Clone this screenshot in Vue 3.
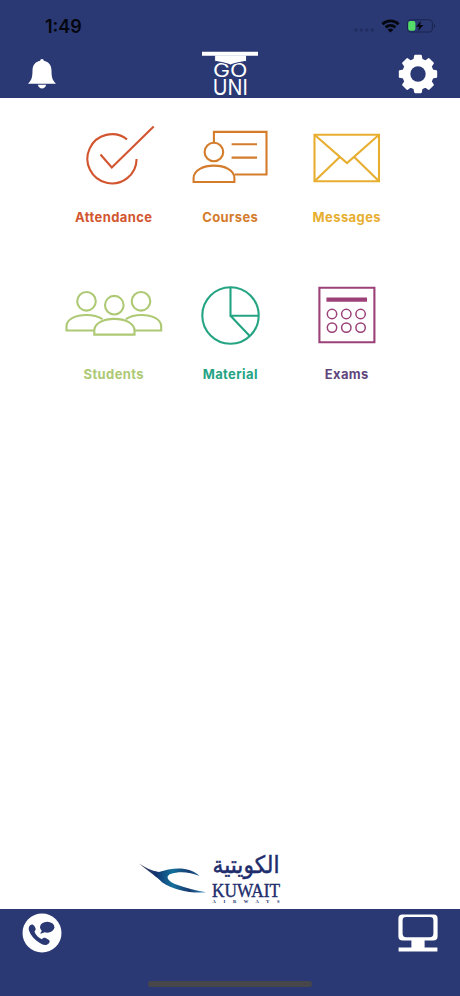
<template>
  <div class="screen">
    <header class="header">
      <div class="status-bar">
        <span class="time">1:49</span>
        <div class="status-icons">
          <svg class="signal" width="22" height="6" viewBox="0 0 22 6">
            <circle v-for="x in [3, 8.4, 13.8, 19.2]" :key="x" :cx="x" cy="3" r="1.8" />
          </svg>
          <svg width="19" height="14" viewBox="0 0 19 14">
            <g fill="none" stroke="#05070e" stroke-width="2.8">
              <path d="M1.4 5.2C6 .7 13 .7 17.6 5.2" />
              <path d="M4.6 8.4C7.4 5.8 11.6 5.8 14.4 8.4" />
            </g>
            <path d="M9.5 13.6 6.6 10.7Q9.5 8.3 12.4 10.7Z" fill="#05070e" />
          </svg>
          <svg class="battery" width="29" height="14" viewBox="0 0 29 14">
            <rect x=".6" y=".8" width="24.8" height="12.2" rx="3.6" fill="none" stroke="#1a2450" stroke-width="1.1" />
            <path d="M27 4.8Q29.2 6.9 27 9Z" fill="#1a2450" />
            <rect x="1.2" y="2" width="7.2" height="9.8" rx="2" fill="#55dc68" />
            <path d="M13.8 1.7 9.2 7.7H12.3L11.1 12.1 16.4 6H13Z" fill="#05070e" />
          </svg>
        </div>
      </div>
      <nav class="top-nav">
        <button class="icon-btn bell" aria-label="Notifications">
          <svg width="28" height="30" viewBox="0 0 28 30" fill="#fff">
            <path d="M14 0C15.2 0 15.7.8 15.8 1.8C20.7 2.7 23.4 6.2 23.5 11.4C23.6 17.6 24 20.5 28 24.7H0C4 20.5 4.4 17.6 4.5 11.4C4.6 6.2 7.3 2.7 12.2 1.8C12.3.8 12.8 0 14 0Z" />
            <path d="M9.8 25.8H18.2C17.4 28.4 16 29.4 14 29.4S10.6 28.4 9.8 25.8Z" />
          </svg>
        </button>
        <svg class="logo" width="58" height="46" viewBox="0 0 58 46" fill="#fff">
          <text x="12" y="26" font-size="18.2" textLength="34.5" lengthAdjust="spacingAndGlyphs">GO</text>
          <text x="11.8" y="44" font-size="21.3" textLength="35" lengthAdjust="spacingAndGlyphs">UNI</text>
          <path d="M13.6 4H45.6V10.2C40 11.2 34 12 29.5 14C25 12 19 11.2 13.6 10.2Z" stroke="#2a3973" stroke-width="1" />
          <path d="M1 .8H57V4.7H1Z" />
        </svg>
        <button class="icon-btn" aria-label="Settings">
          <svg width="40" height="40" viewBox="-20 -20 40 40" fill="#fff">
            <path :d="gearPath" stroke="#fff" stroke-width="2" stroke-linejoin="round" />
            <circle r="7.7" fill="#2a3973" />
          </svg>
        </button>
      </nav>
    </header>

    <main class="menu">
      <a v-for="item in items" :key="item.label" class="tile" :class="item.label.toLowerCase()">
        <svg class="tile-icon" width="116" height="70" viewBox="0 0 116 70">
          <path v-for="d in item.paths" :key="d" :d="d" />
          <circle v-for="(c, i) in item.circles" :key="i" :cx="c[0]" :cy="c[1]" :r="c[2]" />
        </svg>
        <span class="tile-label">{{ item.label }}</span>
      </a>
    </main>

    <div class="sponsor">
      <svg width="146" height="54" viewBox="0 0 146 54">
        <defs>
          <linearGradient id="wing" x1="0" x2="1">
            <stop offset="0" stop-color="#4b4860" />
            <stop offset=".25" stop-color="#123370" />
            <stop offset=".5" stop-color="#14709b" />
            <stop offset=".75" stop-color="#183b70" />
            <stop offset="1" stop-color="#388fba" />
          </linearGradient>
        </defs>
        <path d="M0 12.6C6 16.5 12 19.8 20 21.1C32 17 50 14.5 60.5 25C51 20.8 40 19.9 31.5 22.9C25 25.9 30.5 31 38 33.8C47 37.2 56 39.2 67 41.3C51 42.6 33 38.6 23 31.2C18 26.2 11 21.6 0 12.6Z" fill="url(#wing)" />
        <text class="arabic" x="107" y="21.5" text-anchor="middle" font-size="24" textLength="67" lengthAdjust="spacingAndGlyphs">الكويتية</text>
        <text class="kuwait" x="73" y="45.6" font-size="18.6" textLength="68" lengthAdjust="spacingAndGlyphs">KUWAIT</text>
        <text class="airways" x="73.5" y="52" font-size="4.6" textLength="67">AIRWAYS</text>
      </svg>
    </div>

    <footer class="footer">
      <div class="bottom-nav">
        <button class="icon-btn" aria-label="Contact">
          <svg width="40" height="40" viewBox="0 0 40 40">
            <circle cx="20" cy="20" r="19.5" fill="#fff" />
            <g fill="#2a3973">
              <path d="M8.2 12.2C9.7 10.8 11.3 11.4 12.4 13.1L13.5 15.2C14.2 16.6 13 17.7 12.4 18.5C13.5 22.2 16.7 25.1 20 26.2C21 24.8 22.2 24.3 23.7 25.1L26.2 26.5C28 27.6 28.1 28.8 26.9 30.2C24.9 32.6 21.5 32.6 17.8 30.1C12.2 26.4 8.6 22.3 7 17.5C6.4 15.4 6.7 13.6 8.2 12.2Z" />
              <ellipse cx="25.2" cy="14.2" rx="7.2" ry="5.5" />
              <path d="M20 16.5 22.5 19.3Q20.7 20.7 18 20.3Q19.8 18.9 20 16.5Z" />
            </g>
          </svg>
        </button>
        <button class="icon-btn" aria-label="Desktop">
          <svg width="40" height="40" viewBox="0 0 40 40">
            <path fill-rule="evenodd" d="M4.4 1.4H35.6Q39.6 1.4 39.6 5.4V23.2Q39.6 27.6 35.2 27.6H26.6V34.5H39.4V38.6H.6V34.5H13.4V27.6H4.8Q.4 27.6 .4 23.2V5.4Q.4 1.4 4.4 1.4ZM8 4Q4.6 4 4.6 7.4V20.6Q4.6 24.2 8.2 24.2H31.8Q35.4 24.2 35.4 20.6V7.4Q35.4 4 32 4Z" fill="#fff" />
          </svg>
        </button>
      </div>
      <div class="home-indicator"></div>
    </footer>
  </div>
</template>

<script setup>
const items = [
  {
    label: 'Attendance',
    paths: ['M72 19.3A24.6 24.6 0 1 0 81.6 39', 'M45.5 34.5 56.8 47.5 98.7 6.5'],
    circles: []
  },
  {
    label: 'Courses',
    paths: [
      'M41.9 22V11.9H94.5V54.5H62.6',
      'M59.6 24.3H85M59.6 37.6H85',
      'M21.6 62V58C21.6 50 31.6 45.6 42 45.6S62.4 50 62.4 58V62Z'
    ],
    circles: [[41.9, 32, 9.3]]
  },
  {
    label: 'Messages',
    paths: ['M26.5 14.8H91V61.2H26.5Z', 'M26.5 14.8 59 43 91 14.8', 'M26.5 61.2 51.5 37.3M91 61.2 66.5 37.3'],
    circles: []
  },
  {
    label: 'Students',
    paths: [
      'M39.3 53.5H11.5V49.5C11.5 42 21 38 31.3 38C37.5 38 43.5 39.5 47.5 42.2',
      'M79.5 53.5H106.2V49.5C106.2 42 96.7 38 86.4 38C80.2 38 74.8 39.5 70.8 42.2',
      'M39.3 57.6V53.5C39.3 46 49 41.9 59.3 41.9S79.5 46 79.5 53.5V57.6Z'
    ],
    circles: [[31.5, 24.3, 9.3], [59.3, 28.2, 9.3], [86, 24.3, 9.3]]
  },
  {
    label: 'Material',
    paths: ['M58.5 10.4V38.7H86.8M58.5 38.7 77.7 59'],
    circles: [[58.5, 38.5, 28.2]]
  },
  {
    label: 'Exams',
    paths: ['M31.4 10.8H86.4V65.2H31.4Z', 'M39.5 21.6H78V23.8H39.5Z'],
    circles: [
      [44, 37, 4.7], [58.3, 37, 4.7], [72.6, 37, 4.7],
      [44, 50.6, 4.7], [58.3, 50.6, 4.7], [72.6, 50.6, 4.7]
    ]
  }
]

// eight teeth around a centre at 0,0
const toothProfile = [[-14, 14.8], [-9, 18.4], [9, 18.4], [14, 14.8]]
const gearPoints = []
for (let i = 0; i < 8; i++) {
  for (const [offset, radius] of toothProfile) {
    const angle = ((i * 45 + offset) * Math.PI) / 180
    gearPoints.push(`${(radius * Math.cos(angle)).toFixed(2)} ${(radius * Math.sin(angle)).toFixed(2)}`)
  }
}
const gearPath = `M${gearPoints.join('L')}Z`
</script>

<style>
body {
  background: #fff;
}
</style>

<style scoped>
.screen {
  display: flex;
  flex-direction: column;
  height: 996px;
  background: #fff;
  font-family: Inter, 'Liberation Sans', sans-serif;
  overflow: hidden;
}

.header {
  height: 98px;
  background: #2a3973;
}

.status-bar {
  display: flex;
  justify-content: space-between;
  align-items: center;
  height: 50px;
  padding: 1px 24px 0 45px;
  box-sizing: border-box;
}

.time {
  padding-top: 1px;
  color: #05070e;
  font-size: 18px;
  font-weight: 600;
}

.status-icons {
  display: flex;
  align-items: center;
}

.signal {
  margin: 8px 6px 0 0;
  fill: #222e63;
}

.battery {
  margin-left: 7px;
}

.top-nav {
  display: flex;
  justify-content: space-between;
  align-items: center;
  height: 48px;
  padding: 0 22px;
}

.icon-btn {
  display: flex;
  justify-content: center;
  width: 40px;
  padding: 0;
  border: 0;
  background: none;
}

.logo {
  overflow: visible;
}

.logo text {
  font-family: Inter, 'Liberation Sans', sans-serif;
  font-weight: 400;
}

.menu {
  display: grid;
  grid-template-columns: repeat(3, 116.5px);
  grid-auto-rows: 157px;
  padding: 22px 0 0 55px;
}

.tile {
  display: flex;
  flex-direction: column;
  align-items: center;
}

.tile-icon {
  fill: none;
  stroke: currentColor;
  stroke-width: 2.1;
}

.tile-label {
  margin-top: 17px;
  padding-left: 1px;
  line-height: 20px;
  font-size: 13px;
  font-weight: 650;
  letter-spacing: 0.4px;
}

.attendance {
  color: #d2552f;
}

.courses {
  color: #d47c2c;
}

.messages {
  color: #e7ae2f;
}

.students {
  color: #adc974;
}

.material {
  color: #25a484;
}

.exams {
  color: #9b4177;
}

.exams circle {
  stroke-width: 1.5;
}

.exams .tile-label {
  color: #60467d;
}

.sponsor {
  display: flex;
  margin-top: auto;
  padding: 0 0 4px 139px;
}

.sponsor svg {
  overflow: visible;
}

.sponsor text {
  fill: #202d6c;
}

.arabic {
  font-family: 'DejaVu Sans', sans-serif;
  stroke: #202d6c;
  stroke-width: 0.5;
}

.kuwait {
  font-family: 'Liberation Serif', serif;
  stroke: #202d6c;
  stroke-width: 0.4;
}

.airways {
  font-family: 'Liberation Serif', serif;
  font-weight: 700;
}

.footer {
  display: flex;
  flex-direction: column;
  justify-content: space-between;
  align-items: center;
  height: 87px;
  padding: 4px 0 9px;
  box-sizing: border-box;
  background: #2a3973;
}

.bottom-nav {
  display: flex;
  justify-content: space-between;
  align-self: stretch;
  padding: 0 22px;
}

.home-indicator {
  width: 164px;
  height: 6px;
  border-radius: 3px;
  background: #47474b;
}
</style>
